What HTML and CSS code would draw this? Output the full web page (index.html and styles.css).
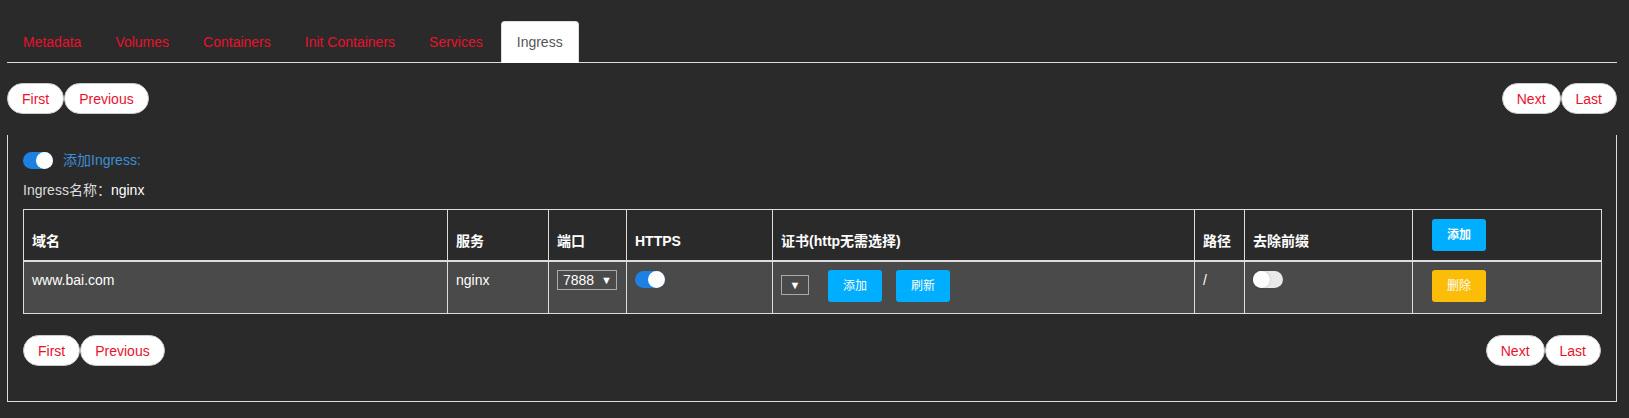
FILE: index.html
```html
<!DOCTYPE html>
<html lang="zh">
<head>
<meta charset="utf-8">
<title>Ingress</title>
<link rel="stylesheet" href="styles.css">
</head>
<body>
<div class="page">
  <ul class="tabs">
    <li class="tab">Metadata</li>
    <li class="tab">Volumes</li>
    <li class="tab">Containers</li>
    <li class="tab">Init Containers</li>
    <li class="tab">Services</li>
    <li class="tab active">Ingress</li>
  </ul>

  <div class="pager pager-top">
    <div class="pager-group"><button class="pg-btn">First</button><button class="pg-btn">Previous</button></div>
    <div class="pager-group"><button class="pg-btn">Next</button><button class="pg-btn">Last</button></div>
  </div>

  <div class="panel">
    <div class="toggle-row">
      <span class="switch on"><span class="knob"></span></span>
      <span class="blue-label">添加Ingress:</span>
    </div>
    <div class="name-row"><span class="name-label">Ingress名称：</span><span class="name-val">nginx</span></div>

    <table class="grid">
      <colgroup>
        <col class="c-domain">
        <col class="c-svc">
        <col class="c-port">
        <col class="c-https">
        <col class="c-cert">
        <col class="c-path">
        <col class="c-strip">
        <col class="c-act">
      </colgroup>
      <thead>
        <tr>
          <th>域名</th>
          <th>服务</th>
          <th>端口</th>
          <th>HTTPS</th>
          <th>证书(http无需选择)</th>
          <th>路径</th>
          <th>去除前缀</th>
          <th class="act"><span class="sbtn blue">添加</span></th>
        </tr>
      </thead>
      <tbody>
        <tr>
          <td>www.bai.com</td>
          <td>nginx</td>
          <td><span class="fsel port"><span class="fsel-val">7888</span><span class="arrow">▼</span></span></td>
          <td><span class="switch on tbl"><span class="knob"></span></span></td>
          <td>
            <div class="cert">
              <span class="fsel cert-sel"><span class="arrow">▼</span></span>
              <span class="sbtn blue">添加</span>
              <span class="sbtn blue refresh">刷新</span>
            </div>
          </td>
          <td>/</td>
          <td><span class="switch off tbl"><span class="knob"></span></span></td>
          <td class="act"><span class="sbtn yellow">删除</span></td>
        </tr>
      </tbody>
    </table>

    <div class="pager pager-bottom">
      <div class="pager-group"><button class="pg-btn">First</button><button class="pg-btn">Previous</button></div>
      <div class="pager-group"><button class="pg-btn">Next</button><button class="pg-btn">Last</button></div>
    </div>
  </div>
</div>
</body>
</html>
```

FILE: styles.css
```css
* { box-sizing: border-box; }

body {
  margin: 0;
  background: #2a2a2a;
  font-family: "Liberation Sans", "Noto Sans CJK SC", sans-serif;
  font-size: 14px;
  line-height: 20px;
  color: #dddddd;
}

.page {
  width: 1610px;
  margin-left: 7px;
  padding-top: 21px;
}

/* tabs */
.tabs {
  display: flex;
  margin: 0;
  padding: 0;
  list-style: none;
  border-bottom: 1px solid #dddddd;
}

.tab {
  margin-bottom: -1px;
  margin-right: 2px;
  padding: 10px 15px;
  border: 1px solid transparent;
  border-radius: 4px 4px 0 0;
  line-height: 20px;
  color: #e8112d;
}

.tab.active {
  background: #ffffff;
  color: #555555;
  border-color: #dddddd #dddddd transparent;
}

/* pager */
.pager {
  display: flex;
  justify-content: space-between;
}

.pager-top { margin-top: 20px; }
.pager-bottom { margin: 21px 0 20px; }

.pager-group { display: flex; }

.pg-btn {
  margin: 0;
  padding: 7px 14px 6px;
  border: 1px solid #cccccc;
  border-radius: 16px;
  background: #ffffff;
  color: #e8112d;
  font-family: "Liberation Sans", sans-serif;
  font-size: 14px;
  line-height: 16px;
}

/* panel */
.panel {
  margin-top: 21px;
  padding: 15px;
  border: 1px solid #dddddd;
  border-top: none;
}

.toggle-row {
  display: flex;
  align-items: center;
  height: 20px;
  margin-bottom: 10px;
}

.blue-label {
  margin-left: 10px;
  color: #3d8fd8;
}

.name-row {
  height: 20px;
  margin-bottom: 9px;
  color: #dddddd;
}

.name-val { color: #ffffff; }

/* switch */
.switch {
  position: relative;
  display: inline-block;
  width: 30px;
  height: 17px;
  border-radius: 9px;
  flex: none;
}

.switch.on { background: #1e80e2; }
.switch.off { background: #e9e9e9; }

.switch .knob {
  position: absolute;
  top: 0;
  width: 17px;
  height: 17px;
  border-radius: 50%;
  background: #ffffff;
}

.switch.on .knob { right: 0; }
.switch.off .knob { left: 0; box-shadow: 0 0 2px rgba(0,0,0,0.25); }

.switch.tbl {
  display: block;
  margin-top: 1px;
}

/* table */
.grid {
  width: 100%;
  border-collapse: collapse;
  table-layout: fixed;
}

.c-domain { width: 424px; }
.c-svc { width: 101px; }
.c-port { width: 78px; }
.c-https { width: 146px; }
.c-cert { width: 422px; }
.c-path { width: 50px; }
.c-strip { width: 168px; }
.c-act { width: 189px; }

.grid th,
.grid td {
  border: 1px solid #dddddd;
  text-align: left;
}

.grid th {
  padding: 9px 8px 9px;
  vertical-align: bottom;
  font-weight: bold;
  color: #ffffff;
  border-bottom: 2px solid #dddddd;
}

.grid td {
  padding: 8px 8px 11px;
  vertical-align: top;
  color: #ffffff;
  background: #4a4a4a;
}

.grid .act { padding-left: 19px; }

/* small buttons */
.sbtn {
  display: block;
  width: 54px;
  height: 32px;
  border-radius: 3px;
  font-size: 12px;
  line-height: 32px;
  text-align: center;
  color: #ffffff;
}

.sbtn.blue { background: #00aeff; }
.sbtn.yellow { background: #fbbd08; }

.cert {
  display: flex;
  align-items: flex-start;
}

.cert .sbtn.refresh { margin-left: 14px; }

/* fake selects */
.fsel {
  display: flex;
  align-items: center;
  height: 20px;
  border: 1px solid #a9a9a9;
  color: #ffffff;
}

.fsel.port {
  width: 60px;
  padding-left: 5px;
  font-size: 14px;
}

.fsel-val { width: 38px; }

.arrow {
  font-size: 11px;
  line-height: 12px;
}

.fsel.cert-sel {
  width: 28px;
  margin-top: 5px;
  margin-right: 19px;
  justify-content: center;
}
```
